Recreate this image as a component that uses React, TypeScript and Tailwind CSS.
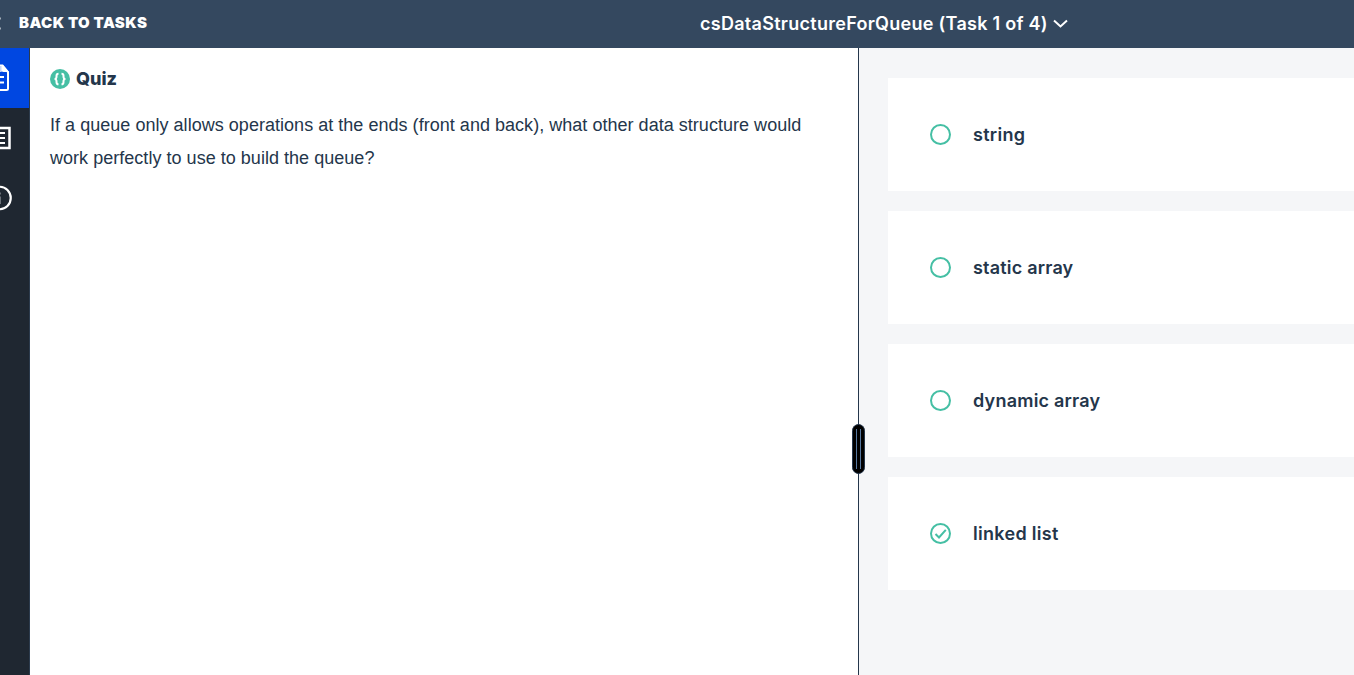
import React from "react";

const answers = [
  { label: "string", selected: false, spacing: "tracking-[0.3px]" },
  { label: "static array", selected: false, spacing: "tracking-[0.2px]" },
  { label: "dynamic array", selected: false, spacing: "tracking-[0.22px]" },
  { label: "linked list", selected: true, spacing: "tracking-[0.3px]" },
];

function Header() {
  return (
    <header className="flex h-12 shrink-0 items-center overflow-hidden bg-[#34485f] text-white">
      <div className="flex w-[700px] shrink-0 items-center pb-0.5">
        <svg className="h-4 w-[19px] shrink-0" viewBox="0 0 19 16" fill="none">
          <path d="M0 3.500H1M0 13.500H1" stroke="#a3adb8" strokeWidth="2" />
        </svg>
        <span className="whitespace-nowrap text-[15px] leading-6 font-black tracking-[0.42px]">BACK TO TASKS</span>
      </div>
      <button className="flex shrink-0 items-center gap-[5px]">
        <span className="whitespace-nowrap text-[18px] leading-6 font-semibold tracking-[0.28px]">csDataStructureForQueue (Task 1 of 4)</span>
        <svg className="h-4 w-4" viewBox="0 0 16 16" fill="none" stroke="currentColor" strokeWidth="2">
          <path d="M1 4.500L7.500 10.500L14 4.500" />
        </svg>
      </button>
    </header>
  );
}

function Sidebar() {
  return (
    <nav className="flex w-[30px] shrink-0 flex-col border-r border-[#2c3b4d] bg-[#1f2731]">
      <div className="flex h-[60px] bg-[#0047e1]">
        <svg className="h-[60px] w-[29px]" viewBox="0 0 29 60">
          <path d="M-8 17.500H2.500L8 24V40.500Q8 42 6.500 42H-8" fill="none" stroke="white" strokeWidth="2" />
          <path d="M0 17H3L9 24H3.500L0 23Z" fill="white" />
          <path d="M0 18H1.500V24H0Z" fill="#c4d4f8" />
          <path d="M-3 29H4M-3 34.500H4" stroke="white" strokeWidth="2" />
        </svg>
      </div>
      <svg className="h-[60px] w-[29px]" viewBox="0 0 29 60" fill="none" stroke="white">
        <path d="M-10 20H9.500V40H-10" strokeWidth="2.500" />
        <path d="M-6 25H5M-6 30H5M-6 35H5" strokeWidth="2" />
      </svg>
      <svg className="h-[60px] w-[29px]" viewBox="0 0 29 60" fill="none">
        <circle cx="-0.500" cy="30" r="11.250" stroke="white" strokeWidth="2.200" />
        <path d="M0 24.500V26.500M0 28.500V36" stroke="#6b7178" strokeWidth="2" />
      </svg>
    </nav>
  );
}

function QuizIcon() {
  return (
    <svg className="h-5 w-5" viewBox="0 0 20 20" fill="none">
      <circle cx="10" cy="10" r="10" fill="#45bfa4" />
      <path d="M8.500 4.700C6.800 4.700 6.500 5.500 6.500 6.800V8.200Q6.500 9.700 4.700 10Q6.500 10.300 6.500 11.800V13.200C6.500 14.500 6.800 15.300 8.500 15.300M11.500 4.700C13.200 4.700 13.500 5.500 13.500 6.800V8.200Q13.500 9.700 15.300 10Q13.500 10.300 13.500 11.800V13.200C13.500 14.500 13.200 15.300 11.500 15.300" stroke="white" strokeWidth="2" />
    </svg>
  );
}

function Radio({ selected }: { selected: boolean }) {
  return (
    <svg className="h-[22px] w-[22px] shrink-0" viewBox="0 0 22 22" fill="none" stroke="#45bfa4" strokeWidth="2">
      <circle cx="10.500" cy="10.500" r="9.500" />
      {selected && <path d="M5.500 11L9 14.500L15.800 6.800" />}
    </svg>
  );
}

export default function App() {
  return (
    <div className="flex h-[675px] w-[1354px] flex-col overflow-hidden bg-white font-['Inter',sans-serif] text-[#24364b]">
      <Header />
      <div className="flex min-h-0 flex-1">
        <Sidebar />
        <main className="w-[828px] shrink-0 pt-[19px] pl-5">
          <h1 className="flex items-center gap-1.5 text-[18px] leading-6 font-extrabold">
            <QuizIcon />
            <span>Quiz</span>
          </h1>
          <p className="mt-[18px] font-['Liberation_Sans',Arial,sans-serif] text-[18px] leading-[33px] tracking-[0.03px] whitespace-nowrap">
            If a queue only allows operations at the ends (front and back), what other data structure would
            <br />
            work perfectly to use to build the queue?
          </p>
        </main>
        <div className="relative w-px shrink-0 bg-[#24364b]">
          <div className="absolute top-[376px] -left-1.5 flex h-[50px] w-[13px] justify-center gap-[3px] rounded-full border border-[#24364b] bg-black py-1">
            <span className="w-px bg-[#56779f]" />
            <span className="w-px bg-[#56779f]" />
          </div>
        </div>
        <section className="flex flex-1 flex-col gap-5 bg-[#f5f6f8] pt-[30px] pl-[29px]">
          {answers.map((answer) => (
            <div key={answer.label} className="flex h-[113px] items-center gap-[21px] bg-white pl-[42px]">
              <Radio selected={answer.selected} />
              <span className={`text-[18px] leading-6 font-semibold whitespace-nowrap ${answer.spacing}`}>{answer.label}</span>
            </div>
          ))}
        </section>
      </div>
    </div>
  );
}
